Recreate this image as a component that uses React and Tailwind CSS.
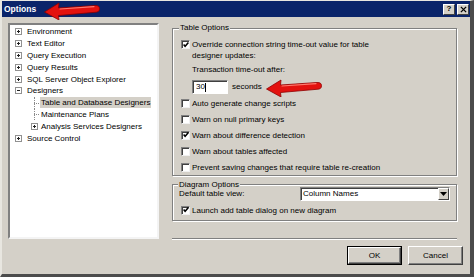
import React from 'react';

const font = { fontFamily: '"Liberation Sans", Arial, sans-serif' };

function Arrow({ className }) {
  return (
    <svg className={className} viewBox="0 0 56 18" width="56" height="18">
      <path
        d="M0.5 10 L15 1 L14.5 6 L51 3.5 Q55.5 3.2 55.5 6.8 Q55.5 10.3 51 10.3 L14.5 13.5 L15 18 Z"
        fill="#e3120f"
        stroke="#8e0000"
        strokeWidth="0.8"
        strokeLinejoin="round"
      />
      <path d="M16 7 L50 4.6" stroke="#ff7a6e" strokeWidth="1.2" strokeLinecap="round" fill="none" />
    </svg>
  );
}

function Expander({ open }) {
  return (
    <div className="w-[7px] h-[7px] border border-[#919191] bg-white flex items-center justify-center relative">
      <div className="absolute w-[3px] h-[1px] bg-[#222]" />
      {!open && <div className="absolute w-[1px] h-[3px] bg-[#222]" />}
    </div>
  );
}

function TreeRow({ label, level = 0, expander, open, selected, line }) {
  return (
    <div className={`flex items-center h-[11.8px] ${level === 0 ? 'pl-[5px]' : 'pl-[21px]'}`}>
      <div className={`relative w-[7px] h-full flex items-center ${level === 0 ? 'mr-[4px]' : 'mr-[2px]'}`}>
        {expander && <Expander open={open} />}
        {line && (
          <>
            <div className="absolute left-[3px] top-1/2 w-[5px] border-t border-dotted border-[#8a8a8a]" />
            <div className={`absolute left-[3px] top-0 border-l border-dotted border-[#8a8a8a] ${line === 'end' ? 'h-1/2' : 'h-full'}`} />
          </>
        )}
      </div>
      <span className={`leading-[11px] px-[1px] ${selected ? 'bg-[#d4d0c8]' : ''}`}>{label}</span>
    </div>
  );
}

function Check({ checked }) {
  return (
    <div className="w-[9px] h-[9px] shrink-0 bg-white border border-t-[#808080] border-l-[#808080] border-b-[#f0f0f0] border-r-[#f0f0f0] shadow-[inset_1px_1px_0_#404040]">
      {checked && (
        <svg viewBox="0 0 9 9" width="8" height="8" className="-mt-[0.5px]">
          <path d="M1.8 4 L3.5 6 L7.2 1.8" stroke="#000" strokeWidth="1.7" fill="none" />
        </svg>
      )}
    </div>
  );
}

function CheckRow({ checked, children, className = '' }) {
  return (
    <div className={`flex items-center gap-[2px] ${className}`}>
      <Check checked={checked} />
      <span className="leading-[11px]">{children}</span>
    </div>
  );
}

function Button({ children, primary }) {
  return (
    <div className={`w-[55px] h-[19px] ${primary ? 'border border-black' : ''}`}>
      <div className="w-full h-full flex items-center justify-center border border-t-white border-l-white border-b-[#404040] border-r-[#404040] shadow-[inset_-1px_-1px_0_#808080]">
        {children}
      </div>
    </div>
  );
}

export default function App() {
  return (
    <div
      className="relative w-[474px] h-[277px] overflow-hidden bg-[#d4d0c8] text-black text-[8px] border-r-[4px] border-b-[3px] border-r-[#4b4b4b] border-b-[#4b4b4b] border-t border-t-[#e8e6e0] border-l-2 border-l-[#e8e6e0]"
      style={font}
    >
      {/* Title bar */}
      <div className="h-[16px] bg-[#0a246a] flex items-center pl-[2px] pr-[1px]">
        <span className="text-white font-bold text-[8.5px]">Options</span>
        <div className="flex-1" />
        <div className="flex gap-[2px]">
          <div className="w-[12px] h-[11px] bg-[#d4d0c8] border border-t-white border-l-white border-b-[#404040] border-r-[#404040] flex items-center justify-center font-bold text-[8px] leading-none">?</div>
          <div className="w-[12px] h-[11px] bg-[#d4d0c8] border border-t-white border-l-white border-b-[#404040] border-r-[#404040] flex items-center justify-center">
            <svg viewBox="0 0 8 8" width="7" height="7">
              <path d="M1 1 L7 7 M7 1 L1 7" stroke="#000" strokeWidth="1.5" />
            </svg>
          </div>
        </div>
      </div>
      <Arrow className="absolute left-[42px] top-[1px]" />

      {/* Main */}
      <div className="flex pt-[6px] pl-[6px]">
        {/* Tree */}
        <div className="w-[151px] h-[216px] bg-white border-2 border-t-[#808080] border-l-[#808080] border-b-[#f4f4f4] border-r-[#f4f4f4] pt-[1px]">
          <TreeRow label="Environment" expander />
          <TreeRow label="Text Editor" expander />
          <TreeRow label="Query Execution" expander />
          <TreeRow label="Query Results" expander />
          <TreeRow label="SQL Server Object Explorer" expander />
          <TreeRow label="Designers" expander open />
          <TreeRow label="Table and Database Designers" level={1} selected line="mid" />
          <TreeRow label="Maintenance Plans" level={1} line="mid" />
          <TreeRow label="Analysis Services Designers" level={1} expander />
          <TreeRow label="Source Control" expander />
        </div>

        {/* Right column */}
        <div className="ml-[13px] w-[285px] flex flex-col">
          <fieldset className="h-[153px] border border-[#808080] shadow-[inset_1px_1px_0_#fff,1px_1px_0_#fff] px-[8px] m-0">
            <legend className="px-[1px] -ml-[2px] leading-[10px] bg-[#d4d0c8]">Table Options</legend>
            <div className="mt-[6px] flex items-start gap-[2px]">
              <div className="mt-[1px]">
                <Check checked />
              </div>
              <div className="leading-[11px]">
                Override connection string time-out value for table
                <br />
                designer updates:
              </div>
            </div>
            <div className="pl-[11px] mt-[3px] leading-[11px]">Transaction time-out after:</div>
            <div className="pl-[11px] mt-[5px] flex items-center gap-[4px]">
              <div className="w-[36px] h-[14px] bg-white border border-t-[#808080] border-l-[#808080] border-b-white border-r-white shadow-[inset_1px_1px_0_#404040] flex items-center pl-[3px]">
                <span>30</span>
                <span className="w-[1px] h-[9px] bg-black" />
              </div>
              <span>seconds</span>
            </div>
            <div className="mt-[1px]">
              <CheckRow className="h-[16px]">Auto generate change scripts</CheckRow>
              <CheckRow className="h-[16px]">Warn on null primary keys</CheckRow>
              <CheckRow className="h-[16px]" checked>Warn about difference detection</CheckRow>
              <CheckRow className="h-[16px]">Warn about tables affected</CheckRow>
              <CheckRow className="h-[16px]">Prevent saving changes that require table re-creation</CheckRow>
            </div>
          </fieldset>

          <fieldset className="mt-[4px] h-[41px] border border-[#808080] shadow-[inset_1px_1px_0_#fff,1px_1px_0_#fff] pl-[6px] pr-[6px] m-0">
            <legend className="px-[1px] -ml-[1px] leading-[9px] bg-[#d4d0c8]">Diagram Options</legend>
            <div className="flex items-start justify-between -mt-[1px]">
              <span className="leading-[11px]">Default table view:</span>
              <div className="mt-[-1px] w-[150px] h-[14px] bg-white border border-t-[#808080] border-l-[#808080] border-b-white border-r-white shadow-[inset_1px_1px_0_#404040] flex items-center">
                <span className="flex-1 pl-[2px]">Column Names</span>
                <div className="w-[11px] h-[12px] bg-[#d4d0c8] border border-t-white border-l-white border-b-[#404040] border-r-[#404040] flex items-center justify-center">
                  <svg viewBox="0 0 7 4" width="7" height="4">
                    <path d="M0 0 L7 0 L3.5 4 Z" fill="#000" />
                  </svg>
                </div>
              </div>
            </div>
            <CheckRow className="h-[14px] mt-[2px] pl-[2px]" checked>Launch add table dialog on new diagram</CheckRow>
          </fieldset>

          <div className="mt-[17px] border-t border-t-[#808080] border-b border-b-white" />
        </div>
      </div>

      {/* Buttons */}
      <div className="flex justify-end gap-[6px] pr-[7px] mt-[6px]">
        <Button primary>OK</Button>
        <Button>Cancel</Button>
      </div>

      <Arrow className="absolute left-[264px] top-[78px]" />
    </div>
  );
}
